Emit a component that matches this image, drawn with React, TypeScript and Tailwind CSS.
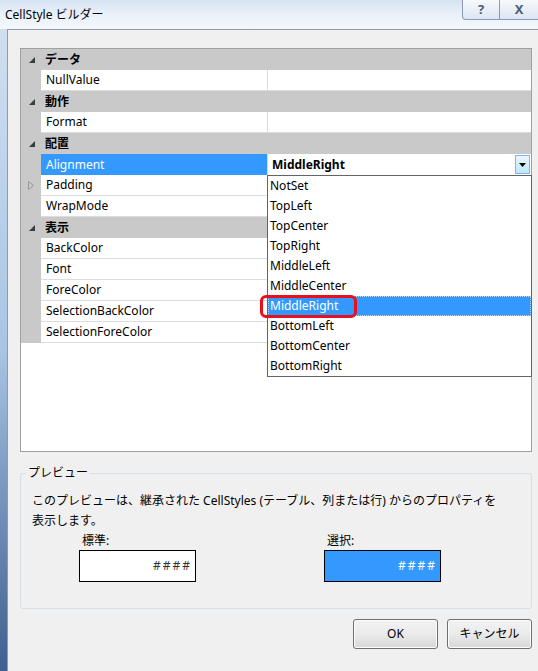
import React from 'react';

const FONT = { fontFamily: '"Noto Sans", "Noto Sans CJK JP", sans-serif' };

type Row =
  | { kind: 'cat'; label: string }
  | { kind: 'prop'; name: string; expandable?: boolean; selected?: boolean };

const ROWS: Row[] = [
  { kind: 'cat', label: 'データ' },
  { kind: 'prop', name: 'NullValue' },
  { kind: 'cat', label: '動作' },
  { kind: 'prop', name: 'Format' },
  { kind: 'cat', label: '配置' },
  { kind: 'prop', name: 'Alignment', selected: true },
  { kind: 'prop', name: 'Padding', expandable: true },
  { kind: 'prop', name: 'WrapMode' },
  { kind: 'cat', label: '表示' },
  { kind: 'prop', name: 'BackColor' },
  { kind: 'prop', name: 'Font' },
  { kind: 'prop', name: 'ForeColor' },
  { kind: 'prop', name: 'SelectionBackColor' },
  { kind: 'prop', name: 'SelectionForeColor' },
];

const ALIGNMENTS = [
  'NotSet', 'TopLeft', 'TopCenter', 'TopRight', 'MiddleLeft',
  'MiddleCenter', 'MiddleRight', 'BottomLeft', 'BottomCenter', 'BottomRight',
];

function CollapseGlyph() {
  return (
    <svg width="6" height="6" viewBox="0 0 6 6">
      <polygon points="6,0 6,6 0,6" fill="#3c3c3c" />
    </svg>
  );
}

function ExpandGlyph() {
  return (
    <svg width="6" height="9" viewBox="0 0 6 9">
      <polygon points="0.5,0.5 5.5,4.5 0.5,8.5" fill="none" stroke="#9a9a9a" />
    </svg>
  );
}

function PropertyGrid() {
  return (
    <div className="relative w-[512px] h-[404px] border border-[#a0a0a0] bg-white">
      {ROWS.map((r, i) =>
        r.kind === 'cat' ? (
          <div key={i} className="flex h-[21px] bg-[#c9c9c9] items-center">
            <div className="w-[20px] flex justify-center pl-[2px]">
              <CollapseGlyph />
            </div>
            <span className="pl-[4px] text-[12px] font-bold text-black">{r.label}</span>
          </div>
        ) : (
          <div key={i} className="flex h-[21px]">
            <div className="w-[20px] bg-[#c9c9c9] flex items-center justify-center">
              {r.expandable && <ExpandGlyph />}
            </div>
            <div
              className={
                r.selected
                  ? 'w-[226px] bg-[#3399ff] text-white flex items-center pl-[5px] text-[12px]'
                  : 'w-[226px] border-b border-[#dcdcdc] flex items-center pl-[5px] text-[12px] text-black'
              }
            >
              {r.name}
            </div>
            <div
              className={
                r.selected
                  ? 'flex-1 border-l border-[#dcdcdc] flex items-center pl-[4px] pr-[1px] text-[12px] font-bold'
                  : 'flex-1 border-l border-b border-[#dcdcdc]'
              }
            >
              {r.selected && (
                <>
                  <span className="flex-1">MiddleRight</span>
                  <div className="w-[15px] h-[19px] border border-[#7eb4ea] bg-gradient-to-b from-[#eaf6fd] to-[#bee6fd] flex items-center justify-center">
                    <svg width="7" height="4" viewBox="0 0 7 4">
                      <polygon points="0,0 7,0 3.5,4" fill="#000" />
                    </svg>
                  </div>
                </>
              )}
            </div>
          </div>
        )
      )}

      {/* open dropdown list */}
      <div className="absolute left-[246px] top-[126px] w-[265px] border border-[#646464] bg-white z-10">
        {ALIGNMENTS.map((a) => (
          <div
            key={a}
            className={
              a === 'MiddleRight'
                ? 'h-[20px] flex items-center pl-[2px] bg-[#3399ff] text-white text-[12px] outline-1 outline-dotted outline-[#c0d8f0] -outline-offset-1'
                : 'h-[20px] flex items-center pl-[2px] text-[12px] text-black'
            }
          >
            {a}
          </div>
        ))}
      </div>

      {/* red annotation around selected item */}
      <div className="absolute left-[239px] top-[246px] w-[97px] h-[23px] border-[3px] border-[#e8101c] rounded-[6px] z-20" />
    </div>
  );
}

function Win7Button({ children }: { children: React.ReactNode }) {
  return (
    <div className="w-[85px] h-[30px] rounded-[3px] border border-[#707070] bg-gradient-to-b from-[#f2f2f2] via-[#ebebeb] to-[#d6d6d6] flex items-center justify-center text-[12px] text-black shadow-[inset_0_0_0_1px_#fcfcfc]">
      {children}
    </div>
  );
}

export default function App() {
  return (
    <div className="w-[538px] h-[671px] overflow-hidden flex flex-col bg-[#e3ecf6]" style={FONT}>
      {/* title bar */}
      <div className="h-[29px] flex items-start bg-gradient-to-b from-[#d5e3f2] via-[#eaf1f9] to-[#f4f7fb] relative">
        <span className="pl-[5px] pt-[7px] text-[12px] text-black leading-[16px]">CellStyle ビルダー</span>
        <div className="ml-auto flex h-[20px]">
          <div className="w-[38px] border border-[#8a9bb1] border-t-0 rounded-bl-[4px] bg-gradient-to-b from-[#f6f9fc] to-[#dce6f2] flex items-center justify-center text-[#4c5e74] text-[13px] font-bold">
            ?
          </div>
          <div className="w-[38px] border-b border-[#8a9bb1] bg-gradient-to-b from-[#f6f9fc] to-[#dce6f2] flex items-center justify-center text-[#4c5e74] text-[13px] font-bold">
            X
          </div>
        </div>
      </div>

      <div className="flex flex-1">
        {/* left glass frame */}
        <div className="w-[7px] bg-gradient-to-b from-[#cfdff0] via-[#a9c4e4] to-[#3f5f8f]" />

        {/* client area */}
        <div className="flex-1 bg-[#f0f0f0] border-l border-t border-[#8f9bab] pl-[12px] pt-[18px] flex flex-col">
          <PropertyGrid />

          {/* preview group */}
          <div className="relative mt-[21px] w-[512px] h-[136px] border border-[#d5dfe5] rounded-[3px] px-[11px] pt-[17px]">
            <span className="absolute left-[5px] -top-[10px] bg-[#f0f0f0] px-[2px] text-[12px] text-black leading-[18px]">
              プレビュー
            </span>
            <p className="text-[12px] leading-[20px] text-black">
              このプレビューは、継承された CellStyles (テーブル、列または行) からのプロパティを<br />
              表示します。
            </p>
            <div className="flex mt-[2px] pl-[47px]">
              <div className="w-[245px]">
                <div className="text-[12px] leading-[16px] pl-[3px]">標準:</div>
                <div className="mt-[1px] w-[117px] h-[32px] border border-black bg-white flex items-center justify-end pr-[3px] text-[12px] tracking-[2px] text-[#333]">
                  ####
                </div>
              </div>
              <div>
                <div className="text-[12px] leading-[16px] pl-[3px]">選択:</div>
                <div className="mt-[1px] w-[117px] h-[32px] border border-black bg-[#3399ff] flex items-center justify-end pr-[3px] text-[12px] tracking-[2px] text-white">
                  ####
                </div>
              </div>
            </div>
          </div>

          {/* buttons */}
          <div className="w-[512px] flex justify-end gap-[9px] mt-[10px]">
            <Win7Button>OK</Win7Button>
            <Win7Button>キャンセル</Win7Button>
          </div>
        </div>
      </div>
    </div>
  );
}
